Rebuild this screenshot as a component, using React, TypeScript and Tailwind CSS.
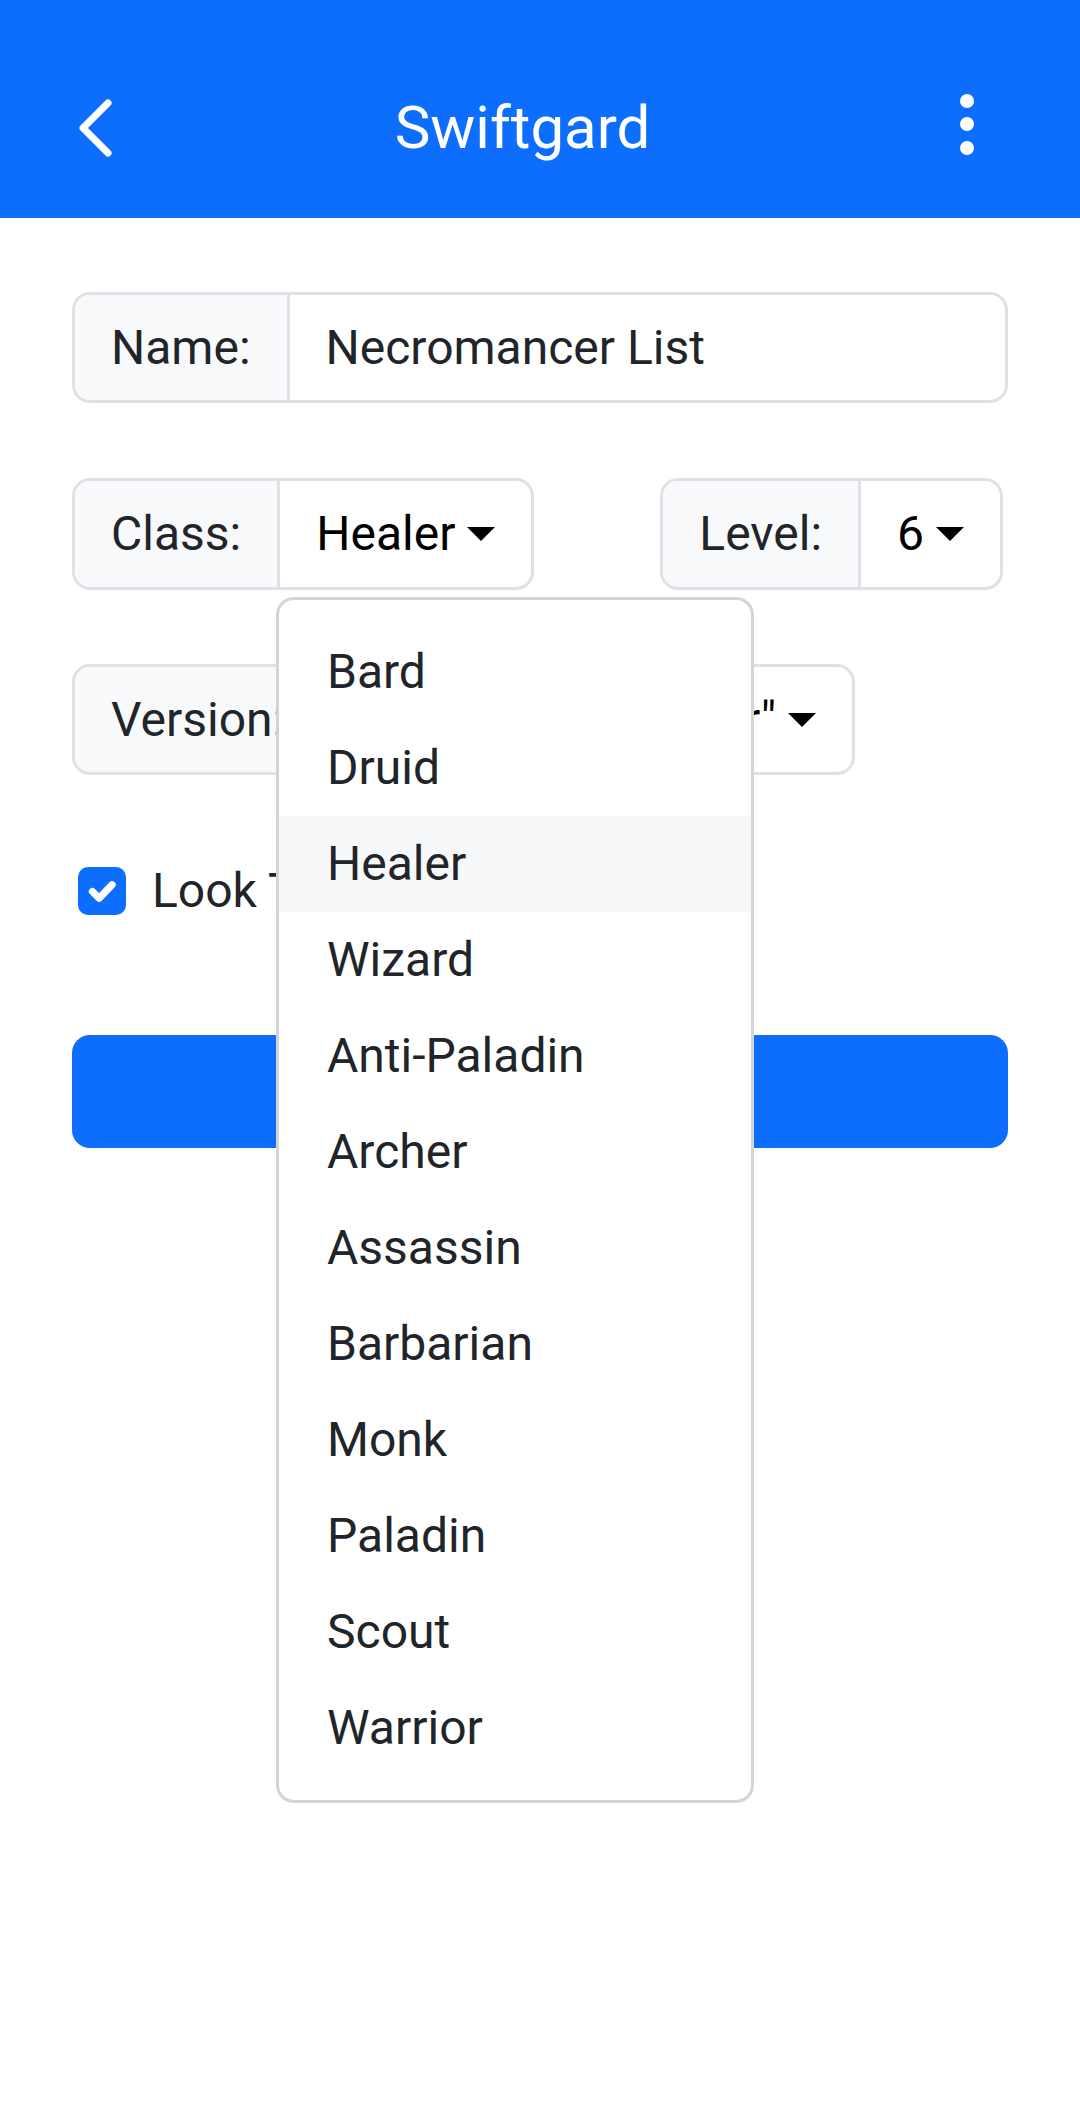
import React from 'react'

const classes = [
  'Bard',
  'Druid',
  'Healer',
  'Wizard',
  'Anti-Paladin',
  'Archer',
  'Assassin',
  'Barbarian',
  'Monk',
  'Paladin',
  'Scout',
  'Warrior',
]

function Caret() {
  return (
    <span className="ml-[12px] inline-block h-0 w-0 border-x-[14px] border-t-[14px] border-x-transparent border-t-black" />
  )
}

function Label({ children }: { children: React.ReactNode }) {
  return (
    <span className="flex items-center border-r-[3px] border-[#dee2e6] bg-[#f8f9fa] px-[36px] text-[#212529]">
      {children}
    </span>
  )
}

export default function App() {
  const selected = 'Healer'

  return (
    <div className="min-h-[2116px] bg-white text-[48px] leading-[72px] text-[#212529] [font-family:Roboto,'Liberation_Sans',sans-serif]">
      {/* top bar */}
      <header className="flex h-[218px] items-center bg-[#0d6efd] pt-[38px] text-white">
        <svg className="ml-[76px] h-[64px] w-[40px]" viewBox="0 0 40 64" fill="none">
          <path d="M32 7 L7 32 L32 57" stroke="white" strokeWidth="7" strokeLinecap="round" strokeLinejoin="round" />
        </svg>
        <h1 className="flex-1 pr-[31px] text-center text-[60px] leading-[72px] font-normal">Swiftgard</h1>
        <svg className="mr-[106px] h-[68px] w-[14px]" viewBox="0 0 14 68" fill="white">
          <circle cx="7" cy="7" r="7" />
          <circle cx="7" cy="30" r="7" />
          <circle cx="7" cy="54" r="7" />
        </svg>
      </header>

      <main className="px-[72px] pt-[74px]">
        {/* name */}
        <div className="flex h-[111px] overflow-hidden rounded-[18px] border-[3px] border-[#dee2e6]">
          <Label>Name:</Label>
          <span className="flex flex-1 items-center px-[36px]">Necromancer List</span>
        </div>

        {/* class + level */}
        <div className="mt-[75px] flex items-start justify-between pr-[5px]">
          <div className="relative">
            <div className="flex h-[112px] rounded-[18px] border-[3px] border-[#dee2e6]">
              <span className="flex items-center rounded-l-[15px] border-r-[3px] border-[#dee2e6] bg-[#f8f9fa] px-[36px]">
                Class:
              </span>
              <span className="flex items-center px-[36px] text-black">
                {selected}
                <Caret />
              </span>
            </div>

            {/* open menu */}
            <ul className="absolute left-[204px] top-full z-10 mt-[7px] w-[478px] rounded-[18px] border-[3px] border-[#d4d4d4] bg-white py-[24px]">
              {classes.map((c) => (
                <li
                  key={c}
                  className={`px-[48px] py-[12px] ${c === selected ? 'bg-[#f7f8fa]' : ''}`}
                >
                  {c}
                </li>
              ))}
            </ul>
          </div>

          <div className="flex h-[112px] rounded-[18px] border-[3px] border-[#dee2e6]">
            <span className="flex items-center rounded-l-[15px] border-r-[3px] border-[#dee2e6] bg-[#f8f9fa] px-[36px]">
              Level:
            </span>
            <span className="flex items-center px-[36px] text-black">
              6
              <Caret />
            </span>
          </div>
        </div>

        {/* version */}
        <div className="mt-[74px] flex h-[111px] w-[783px] rounded-[18px] border-[3px] border-[#dee2e6]">
          <span className="flex items-center rounded-l-[15px] border-r-[3px] border-[#dee2e6] bg-[#f8f9fa] pl-[36px] pr-[38px]">
            Version:
          </span>
          <span className="flex flex-1 items-center justify-end overflow-hidden whitespace-nowrap px-[36px] text-black">
            2.0 "Warrior"
            <Caret />
          </span>
        </div>

        {/* checkbox */}
        <label className="mt-[80px] flex items-center">
          <span className="ml-[6px] flex h-[48px] w-[48px] items-center justify-center rounded-[10px] bg-[#0d6efd]">
            <svg className="h-[48px] w-[48px]" viewBox="0 0 20 20" fill="none">
              <path d="M6 10.2l2.8 2.8l5.4-5.6" stroke="white" strokeWidth="3" strokeLinecap="round" strokeLinejoin="round" />
            </svg>
          </span>
          <span className="ml-[26px]">Look Tidy</span>
        </label>

        {/* submit */}
        <button className="mt-[108px] flex h-[113px] w-full items-center justify-center rounded-[18px] bg-[#0d6efd] text-white">
          Save
        </button>
      </main>
    </div>
  )
}
